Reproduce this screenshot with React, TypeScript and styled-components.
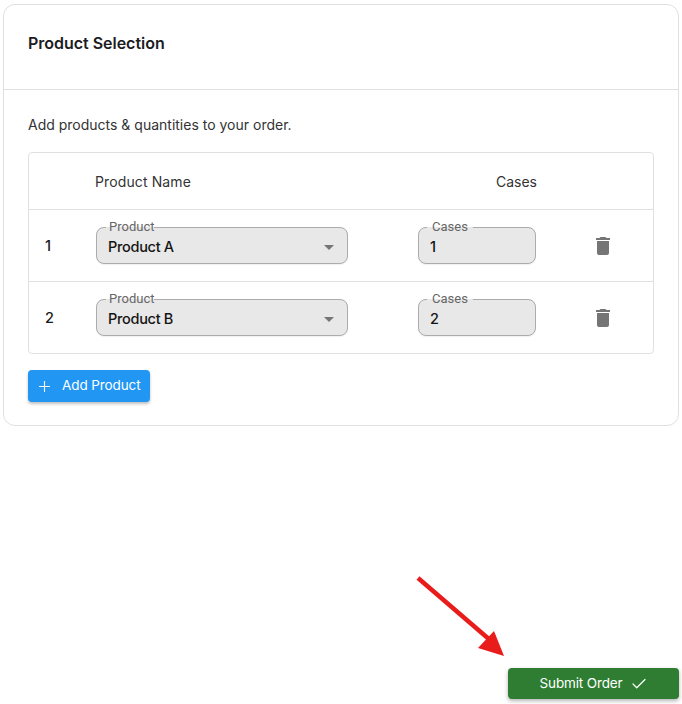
import styled, { createGlobalStyle } from "styled-components";
import { Plus, Check } from "lucide-react";

const GlobalStyle = createGlobalStyle`
    html, body {
        margin: 0;
        padding: 0;
        background: #fff;
    }
    body {
        font-family: Inter, "Noto Sans", sans-serif;
        color: #1a1a1a;
    }
`

const Page = styled.div`
    position: relative;
    box-sizing: border-box;
    height: 704px;
    padding: 4px 3px 5px;
    display: flex;
    flex-direction: column;
    justify-content: space-between;
`

const Card = styled.section`
    border: 1px solid #e0e0e0;
    border-radius: 12px;
    height: 422px;
    box-sizing: border-box;
`

const CardHeader = styled.header`
    height: 85px;
    box-sizing: border-box;
    border-bottom: 1px solid #e0e0e0;
    padding: 0 24px 8px;
    display: flex;
    align-items: center;
`

const Title = styled.h2`
    margin: 0;
    font-size: 16px;
    font-weight: 600;
    letter-spacing: -0.02px;
    color: #1c1c1f;
`

const CardBody = styled.div`
    padding: 24px 24px 0;
`

const Hint = styled.p`
    margin: 0 0 17px;
    font-size: 14px;
    line-height: 21px;
    color: #333;
`

const TableBox = styled.div`
    border: 1px solid #e0e0e0;
    border-radius: 4px;
`

const Row = styled.div<{ $head?: boolean }>`
    display: grid;
    grid-template-columns: 67px 252px 70px 118px 1fr;
    align-items: center;
    height: ${(p) => (p.$head ? "56px" : "71px")};
    border-top: ${(p) => (p.$head ? "none" : "1px solid #e0e0e0")};
`

const HeadCell = styled.div<{ $right?: boolean }>`
    font-size: 14px;
    letter-spacing: ${(p) => (p.$right ? "0" : "0.12px")};
    color: #333;
    text-align: ${(p) => (p.$right ? "right" : "left")};
    margin: ${(p) => (p.$right ? "0 -1px 0 0" : "0 0 0 -1px")};
`

const RowNumber = styled.div`
    padding-left: 16px;
    font-size: 14.5px;
    font-weight: 500;
    color: #1a1a1a;
`

const Field = styled.fieldset`
    margin: -6px 0 0;
    padding: 0 11px;
    height: 43px;
    box-sizing: border-box;
    min-width: 0;
    border: 1px solid #acacac;
    border-radius: 8px;
    background: #e8e8e8;
    display: flex;
    align-items: center;
    justify-content: space-between;
    box-shadow: 0 1px 1px rgba(0, 0, 0, 0.06);
`

const FieldLabel = styled.legend<{ $wide?: boolean }>`
    margin-left: ${(p) => (p.$wide ? "-3px" : "-2px")};
    padding: ${(p) => (p.$wide ? "0 5px" : "0 0 0 3px")};
    font-family: Roboto, "Liberation Sans", sans-serif;
    font-size: 13px;
    line-height: 12px;
    color: #666;
`

const FieldValue = styled.span`
    font-size: 14.5px;
    font-weight: 500;
    letter-spacing: -0.3px;
    color: #141414;
    margin-top: -4px;
`

const Caret = styled.svg`
    width: 24px;
    height: 24px;
    fill: #757575;
    margin-right: -5px;
    margin-top: -3px;
`

const TrashCell = styled.div`
    display: flex;
    justify-content: flex-end;
    padding-right: 38px;
`

const TrashIcon = styled.svg`
    width: 24px;
    height: 24px;
    fill: #757575;
`

const ButtonLabel = styled.span`
    margin-top: -2px;
`

const AddButton = styled.button`
    margin-top: 16px;
    width: 122px;
    height: 32px;
    border: none;
    border-radius: 4px;
    background: #2196f3;
    color: #fff;
    font-family: inherit;
    font-size: 13.5px;
    font-weight: 400;
    letter-spacing: -0.1px;
    display: flex;
    align-items: center;
    gap: 9px;
    padding: 0 0 0 8px;
    box-shadow: 0 2px 3px rgba(0, 0, 0, 0.25);
`

const Footer = styled.footer`
    display: flex;
    justify-content: flex-end;
`

const SubmitButton = styled.button`
    width: 171px;
    height: 31px;
    border: none;
    border-radius: 4px;
    background: #2e7d32;
    color: #fff;
    font-family: inherit;
    font-size: 13.5px;
    letter-spacing: -0.15px;
    display: flex;
    align-items: center;
    justify-content: center;
    gap: 8px;
    padding: 0 0 0 1px;
    box-shadow: 0 2px 4px rgba(0, 0, 0, 0.3);
`

const Arrow = styled.svg`
    position: absolute;
    left: 410px;
    top: 570px;
    width: 100px;
    height: 92px;
`

const rows = [
    { id: 1, product: "Product A", cases: 1 },
    { id: 2, product: "Product B", cases: 2 },
];

export default function App() {
    return (
        <Page>
            <GlobalStyle />
            <Card>
                <CardHeader>
                    <Title>Product Selection</Title>
                </CardHeader>
                <CardBody>
                    <Hint>Add products &amp; quantities to your order.</Hint>
                    <TableBox>
                        <Row $head>
                            <div />
                            <HeadCell>Product Name</HeadCell>
                            <div />
                            <HeadCell $right>Cases</HeadCell>
                            <div />
                        </Row>
                        {rows.map((row) => (
                            <Row key={row.id}>
                                <RowNumber>{row.id}</RowNumber>
                                <Field>
                                    <FieldLabel>Product</FieldLabel>
                                    <FieldValue>{row.product}</FieldValue>
                                    <Caret viewBox="0 0 24 24"><path d="M7 10l5 5 5-5z" /></Caret>
                                </Field>
                                <div />
                                <Field>
                                    <FieldLabel $wide>Cases</FieldLabel>
                                    <FieldValue>{row.cases}</FieldValue>
                                </Field>
                                <TrashCell>
                                    <TrashIcon viewBox="0 0 24 24">
                                        <path d="M6 19c0 1.1.9 2 2 2h8c1.1 0 2-.9 2-2V7H6v12zM19 4h-3.5l-1-1h-5l-1 1H5v2h14V4z" />
                                    </TrashIcon>
                                </TrashCell>
                            </Row>
                        ))}
                    </TableBox>
                    <AddButton>
                        <Plus size={17} strokeWidth={1.6} />
                        <ButtonLabel>Add Product</ButtonLabel>
                    </AddButton>
                </CardBody>
            </Card>
            <Footer>
                <SubmitButton>
                    <ButtonLabel>Submit Order</ButtonLabel>
                    <Check size={18} strokeWidth={1.6} />
                </SubmitButton>
            </Footer>
            <Arrow viewBox="0 0 100 92">
                <line x1="8" y1="8" x2="80" y2="70" stroke="#e91c1c" strokeWidth="4.5" />
                <polygon points="94,86 68,78 84,61" fill="#e91c1c" />
            </Arrow>
        </Page>
    )
}
